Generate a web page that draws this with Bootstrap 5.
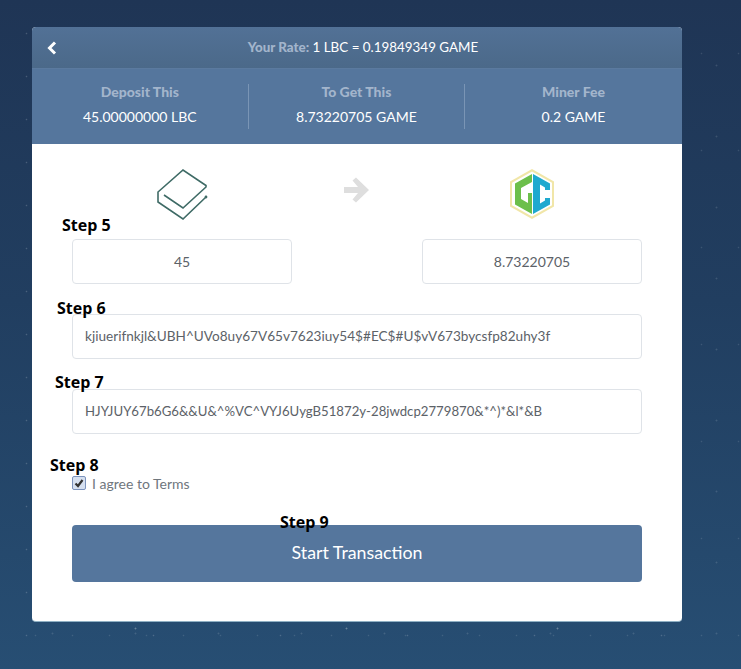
<!DOCTYPE html>
<html lang="en">
<head>
  <meta charset="UTF-8" />
  <meta name="viewport" content="width=device-width, initial-scale=1.0" />
  <title>Start Transaction</title>
  <link href="https://cdn.jsdelivr.net/npm/bootstrap@5.3.0/dist/css/bootstrap.min.css" rel="stylesheet" />
  <style>
    html, body { height: 100%; }
    body {
      margin: 0;
      overflow: hidden;
      font-family: "Lato", "Liberation Sans", sans-serif;
      background-color: #213d5f;
      background-image:
        radial-gradient(circle, rgba(255,255,255,.3) 0 .7px, transparent 1.2px),
        radial-gradient(circle, rgba(255,255,255,.13) 0 .7px, transparent 1.2px),
        radial-gradient(circle, rgba(255,255,255,.18) 0 .6px, transparent 1.1px),
        radial-gradient(circle, rgba(255,255,255,.12) 0 .6px, transparent 1.1px),
        linear-gradient(180deg, #1f3555, #213e60 45%, #274e73);
      background-size: 211px 137px, 83px 71px, 127px 43px, 37px 97px, 100% 100%;
      background-position: 30px 12px, 11px 30px, 90px 55px, 17px 5px, 0 0;
    }
    .swap-card {
      position: relative;
      width: 650px;
      height: 595px;
      margin: 27px 0 0 32px;
      background: #fff;
      border-bottom: 1px solid #8fb0c4;
      border-radius: 4px;
      overflow: hidden;
    }
    .rate-bar {
      height: 42px;
      padding: 0 14px;
      background: linear-gradient(180deg, #527196, #4b6989);
      border-bottom: 1px solid #5b7a9f;
      color: #fff;
      font-size: 13.4px;
      font-weight: 700;
    }
    .rate-back { width: 12px; }
    .rate-text b { color: #a3b5cc; font-weight: 900; }
    .rate-text span { font-weight: 400; }
    .stats-bar {
      height: 75px;
      background: #55769d;
      padding: 15px 0;
    }
    .stat-cell {
      width: 216.6px;
      height: 45px;
      text-align: center;
      border-right: 1px solid #7a95b5;
    }
    .stat-cell:last-child { border-right: 0; }
    .stat-label { color: #a3b5cc; font-size: 14px; font-weight: 900; line-height: 18px; margin-top: -1px; }
    .stat-value { color: #fff; font-size: 14px; line-height: 18px; margin-top: 7px; }
    .swap-body { padding: 24px 40px 0; }
    .coin-row { height: 52px; margin-bottom: 19px; }
    .coin-slot { width: 220px; }
    .coin-arrow { width: 130px; }
    .amount-row { margin-bottom: 30px; }
    .swap-input {
      display: block;
      width: 220px;
      height: 45px;
      padding: 0 12px;
      border: 1px solid #dfe3e8;
      border-radius: 4px;
      color: #5c6268;
      font-size: 14px;
      line-height: 43px;
      background: #fff;
    }
    .swap-input.form-control { min-height: 0; }
    .swap-wide {
      width: 570px;
      text-align: left;
      height: 45px;
      margin-bottom: 30px;
      padding-bottom: 2px;
      font-size: 13.6px;
    }
    .swap-wide.swap-tight { font-size: 13.2px; }
    .terms-row { height: 20px; margin-top: 39px; color: #6f767d; font-size: 14px; }
    .terms-row input {
      appearance: none;
      width: 14px;
      height: 14px;
      margin: 0 6px 0 0;
      border: 1px solid #7c93bd;
      border-radius: 2px;
      background: #d6e0f0 url("data:image/svg+xml,%3Csvg xmlns='http://www.w3.org/2000/svg' viewBox='0 0 12 12'%3E%3Cpath d='M2.500 6.500 5 9 9.500 3' fill='none' stroke='%23333' stroke-width='2.200'/%3E%3C/svg%3E") center / 12px 12px no-repeat;
    }
    .start-btn {
      display: block;
      width: 570px;
      height: 57px;
      margin-top: 32px;
      padding-bottom: 8px;
      background: #55769d;
      border: 0;
      border-radius: 4px;
      color: #fff;
      font-size: 17.8px;
    }
    .start-btn:hover { background: #55769d; color: #fff; }
    .step-note {
      position: absolute;
      color: #000;
      font-family: "Open Sans", "DejaVu Sans", sans-serif;
      font-size: 16px;
      font-weight: 700;
      line-height: 20px;
      white-space: nowrap;
    }
    .step-5 { left: 30px; top: 188px; }
    .step-6 { left: 25px; top: 271px; }
    .step-7 { left: 23px; top: 345px; }
    .step-8 { left: 18px; top: 428px; }
    .step-9 { left: 248px; top: 485px; }
  </style>
</head>
<body>
  <div class="swap-card">
    <div class="rate-bar d-flex align-items-center">
      <svg class="rate-back" width="12" height="14" viewBox="0 0 12 14"><path d="M9 1.500 3.500 7 9 12.500" fill="none" stroke="#fff" stroke-width="3"/></svg>
      <div class="rate-text flex-grow-1 text-center"><b>Your Rate:</b> <span>1 LBC = 0.19849349 GAME</span></div>
    </div>
    <div class="stats-bar d-flex">
      <div class="stat-cell">
        <div class="stat-label">Deposit This</div>
        <div class="stat-value">45.00000000 LBC</div>
      </div>
      <div class="stat-cell">
        <div class="stat-label">To Get This</div>
        <div class="stat-value">8.73220705 GAME</div>
      </div>
      <div class="stat-cell">
        <div class="stat-label">Miner Fee</div>
        <div class="stat-value">0.2 GAME</div>
      </div>
    </div>
    <div class="swap-body">
      <div class="coin-row d-flex align-items-center">
        <div class="coin-slot">
          <svg class="d-block mx-auto" width="52" height="52" viewBox="0 0 52 52">
            <path d="M8 27 27 40 50 19V17.500L27 2 2 24V34L27 51 50 29" fill="none" stroke="#3f6b66" stroke-width="1.600"/>
            <circle cx="50" cy="29" r="1.400" fill="#3f6b66"/>
          </svg>
        </div>
        <div class="coin-arrow pb-2">
          <svg class="d-block mx-auto" width="28" height="28" viewBox="0 0 28 28"><path d="M1 11h14L9.500 4.500 13 1.500 26 14 13 26.500 9.500 23.500 15 17H1z" fill="#dedede"/></svg>
        </div>
        <div class="coin-slot">
          <svg class="d-block mx-auto" width="46" height="52" viewBox="0 0 46 52">
            <path d="M23 1 45 13.500V38.500L23 51 1 38.500V13.500z" fill="#f1e6a8"/>
            <path d="M23 3.500 43 14.700V37.300L23 48.500 3 37.300V14.700z" fill="#fff"/>
            <path d="M23 6 6 15.500V36.500L23 46V25H19V35L12 31V20L23 14z" fill="#6cbf4b"/>
            <path d="M24 6 41 15.500V22H36V19.500L31 16.500V35.500L36 32.500V30H41V36.500L24 46z" fill="#1fa9cf"/>
          </svg>
        </div>
      </div>
      <div class="amount-row d-flex justify-content-between">
        <input class="form-control swap-input text-center" type="text" value="45" />
        <input class="form-control swap-input text-center" type="text" value="8.73220705" />
      </div>
      <input class="form-control swap-input swap-wide" type="text" value="kjiuerifnkjl&amp;UBH^UVo8uy67V65v7623iuy54$#EC$#U$vV673bycsfp82uhy3f" />
      <input class="form-control swap-input swap-wide swap-tight mb-0" type="text" value="HJYJUY67b6G6&amp;&amp;U&amp;^%VC^VYJ6UygB51872y-28jwdcp2779870&amp;*^)*&amp;l*&amp;B" />
      <label class="terms-row d-flex align-items-center">
        <input type="checkbox" checked />
        I agree to Terms
      </label>
      <button class="btn start-btn" type="button">Start Transaction</button>
    </div>
    <div class="step-note step-5">Step 5</div>
    <div class="step-note step-6">Step 6</div>
    <div class="step-note step-7">Step 7</div>
    <div class="step-note step-8">Step 8</div>
    <div class="step-note step-9">Step 9</div>
  </div>
  <script src="https://cdn.jsdelivr.net/npm/bootstrap@5.3.0/dist/js/bootstrap.bundle.min.js"></script>
</body>
</html>
